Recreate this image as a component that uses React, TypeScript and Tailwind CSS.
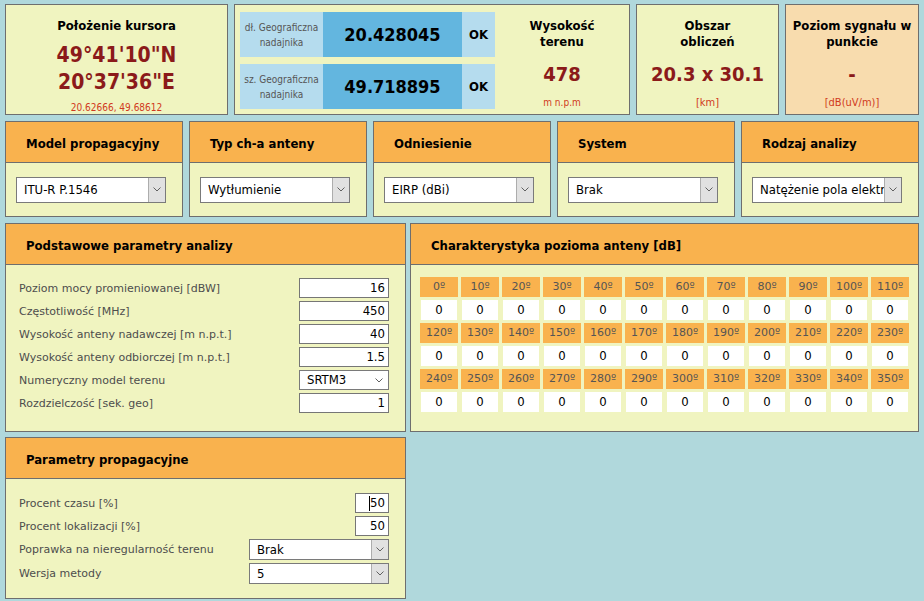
import React from 'react';

const Chevron = () => (
  <svg width="8" height="5" viewBox="0 0 8 5" fill="none">
    <path d="M0.5 0.5L4 4L7.5 0.5" stroke="#606060" strokeWidth="1" />
  </svg>
);

function FakeSelect({ value, w, h, plain = false }: { value: string; w: string; h: string; plain?: boolean }) {
  return (
    <div className={`${w} ${h} flex items-stretch bg-white border border-[#7a7a7a] text-[13px] text-black font-['DejaVu_Sans_Condensed','DejaVu_Sans',sans-serif]`}>
      <div className="flex-1 flex items-center pl-[7px] overflow-hidden whitespace-nowrap">{value}</div>
      {plain ? (
        <div className="w-[18px] flex items-center justify-center">
          <Chevron />
        </div>
      ) : (
        <div className="w-[17px] flex items-center justify-center bg-[#e1e1e1] border-l border-[#adadad]">
          <Chevron />
        </div>
      )}
    </div>
  );
}

function PanelHeader({ title }: { title: string }) {
  return (
    <div className="h-[41px] pt-[3px] bg-[#f9b24e] border-b border-[#6e6e6e] flex items-center pl-[20px] font-bold text-[13px] text-black shrink-0 font-['DejaVu_Sans_Condensed','DejaVu_Sans',sans-serif]">
      {title}
    </div>
  );
}

function NumInput({ value, w, caret = false }: { value: string; w: string; caret?: boolean }) {
  return (
    <div className={`${w} h-[20px] bg-white border border-[#767676] flex items-center justify-end pr-[3px] text-[13px] text-black font-['DejaVu_Sans_Condensed','DejaVu_Sans',sans-serif]`}>
      {caret && <span className="inline-block w-px h-[15px] bg-black" />}
      {value}
    </div>
  );
}

const basicParams: { label: string; value: string; select?: boolean }[] = [
  { label: 'Poziom mocy promieniowanej [dBW]', value: '16' },
  { label: 'Częstotliwość [MHz]', value: '450' },
  { label: 'Wysokość anteny nadawczej [m n.p.t.]', value: '40' },
  { label: 'Wysokość anteny odbiorczej [m n.p.t.]', value: '1.5' },
  { label: 'Numeryczny model terenu', value: 'SRTM3', select: true },
  { label: 'Rozdzielczość [sek. geo]', value: '1' },
];

const dropdowns = [
  { title: 'Model propagacyjny', value: 'ITU-R P.1546' },
  { title: 'Typ ch-a anteny', value: 'Wytłumienie' },
  { title: 'Odniesienie', value: 'EIRP (dBi)' },
  { title: 'System', value: 'Brak' },
  { title: 'Rodzaj analizy', value: 'Natężenie pola elektr' },
];

const angleRows = [0, 1, 2].map((r) => Array.from({ length: 12 }, (_, i) => (r * 12 + i) * 10));

export default function App() {
  return (
    <div className="w-[924px] h-[601px] bg-[#b0d8dc] font-['DejaVu_Sans',sans-serif] px-[5px] pt-[4px] flex flex-col gap-[6px] overflow-hidden">
      {/* Top info row */}
      <div className="flex gap-[6px] h-[111px] font-['DejaVu_Sans_Condensed','DejaVu_Sans',sans-serif]">
        <div className="w-[223px] bg-[#f0f4c0] border border-[#6e6e6e] flex flex-col items-center pt-[13px]">
          <div className="font-bold text-[13px] leading-[16px] text-black">Położenie kursora</div>
          <div className="mt-[8px] font-bold text-[21px] leading-[27px] text-[#8b1a1a] text-center">
            49°41'10"N
            <br />
            20°37'36"E
          </div>
          <div className="mt-[4px] text-[10px] text-[#d03a20]">20.62666, 49.68612</div>
        </div>

        <div className="w-[396px] bg-[#f0f4c0] border border-[#6e6e6e] flex pl-[5px] pt-[7px]">
          <div className="flex flex-col gap-[7px]">
            {[
              { label: 'dł. Geograficzna', value: '20.428045' },
              { label: 'sz. Geograficzna', value: '49.718895' },
            ].map((r) => (
              <div key={r.value} className="flex h-[45px]">
                <div className="w-[83px] bg-[#b5dcee] flex flex-col items-center justify-center text-[10px] leading-[15px] text-[#555] whitespace-nowrap">
                  <span>{r.label}</span>
                  <span>nadajnika</span>
                </div>
                <div className="w-[139px] bg-[#63b6df] flex items-center justify-center font-bold text-[18px] text-black">
                  {r.value}
                </div>
                <div className="w-[33px] bg-[#b5dcee] flex items-center justify-center font-bold text-[13px] text-black">
                  OK
                </div>
              </div>
            ))}
          </div>
          <div className="flex-1 flex flex-col items-center pt-[6px]">
            <div className="font-bold text-[13px] leading-[16px] text-center text-black">
              Wysokość
              <br />
              terenu
            </div>
            <div className="mt-[11px] font-bold text-[20px] leading-[27px] text-[#8b1a1a]">478</div>
            <div className="mt-[7px] text-[10px] text-[#d03a20]">m n.p.m</div>
          </div>
        </div>

        <div className="w-[143px] bg-[#f0f4c0] border border-[#6e6e6e] flex flex-col items-center pt-[13px]">
          <div className="font-bold text-[13px] leading-[16px] text-center text-black">
            Obszar
            <br />
            obliczeń
          </div>
          <div className="mt-[11px] font-bold text-[20px] leading-[27px] text-[#8b1a1a]">20.3 x 30.1</div>
          <div className="mt-[7px] text-[11px] text-[#d03a20]">[km]</div>
        </div>

        <div className="flex-1 bg-[#f8dcae] border border-[#6e6e6e] flex flex-col items-center pt-[13px]">
          <div className="font-bold text-[13px] leading-[16px] text-center text-black">
            Poziom sygnału w
            <br />
            punkcie
          </div>
          <div className="mt-[11px] font-bold text-[20px] leading-[27px] text-[#8b1a1a]">-</div>
          <div className="mt-[7px] text-[11px] text-[#d03a20]">[dB(uV/m)]</div>
        </div>
      </div>

      {/* Dropdown row */}
      <div className="flex gap-[6px] h-[96px]">
        {dropdowns.map((d) => (
          <div key={d.title} className="flex-1 bg-[#f0f4c0] border border-[#6e6e6e] flex flex-col">
            <PanelHeader title={d.title} />
            <div className="flex-1 flex items-center pl-[10px]">
              <FakeSelect value={d.value} w="w-[150px]" h="h-[26px]" />
            </div>
          </div>
        ))}
      </div>

      {/* Lower area */}
      <div className="flex gap-[4px]">
        <div className="w-[401px] flex flex-col gap-[5px]">
          <div className="h-[209px] bg-[#f0f4c0] border border-[#6e6e6e] flex flex-col">
            <PanelHeader title="Podstawowe parametry analizy" />
            <div className="flex flex-col gap-[3px] pt-[13px] pl-[13px] pr-[16px]">
              {basicParams.map((p) => (
                <div key={p.label} className="flex items-center justify-between h-[20px]">
                  <span className="pt-[2px] text-[11px] text-[#4d4d4d]">{p.label}</span>
                  {p.select ? (
                    <FakeSelect value={p.value} w="w-[90px]" h="h-[20px]" plain />
                  ) : (
                    <NumInput value={p.value} w="w-[90px]" />
                  )}
                </div>
              ))}
            </div>
          </div>

          <div className="h-[162px] bg-[#f0f4c0] border border-[#6e6e6e] flex flex-col">
            <PanelHeader title="Parametry propagacyjne" />
            <div className="flex flex-col gap-[3px] pt-[14px] pl-[13px] pr-[16px]">
              <div className="flex items-center justify-between h-[20px]">
                <span className="pt-[2px] text-[11px] text-[#4d4d4d]">Procent czasu [%]</span>
                <NumInput value="50" w="w-[34px]" caret />
              </div>
              <div className="flex items-center justify-between h-[20px]">
                <span className="pt-[2px] text-[11px] text-[#4d4d4d]">Procent lokalizacji [%]</span>
                <NumInput value="50" w="w-[34px]" />
              </div>
              <div className="flex items-center justify-between h-[21px]">
                <span className="pt-[2px] text-[11px] text-[#4d4d4d]">Poprawka na nieregularność terenu</span>
                <FakeSelect value="Brak" w="w-[140px]" h="h-[21px]" />
              </div>
              <div className="flex items-center justify-between h-[21px]">
                <span className="pt-[2px] text-[11px] text-[#4d4d4d]">Wersja metody</span>
                <FakeSelect value="5" w="w-[140px]" h="h-[21px]" />
              </div>
            </div>
          </div>
        </div>

        <div className="w-[509px] h-[209px] bg-[#f0f4c0] border border-[#6e6e6e] flex flex-col">
          <PanelHeader title="Charakterystyka pozioma anteny [dB]" />
          <div className="flex flex-col gap-[3px] pt-[12px] pl-[9px]">
            {angleRows.map((row, ri) => (
              <React.Fragment key={ri}>
                <div className="flex gap-[3px]">
                  {row.map((a) => (
                    <div key={a} className="w-[38px] h-[20px] bg-[#f9b24e] flex items-center justify-center text-[11px] text-[#555]">
                      {a}º
                    </div>
                  ))}
                </div>
                <div className="flex gap-[3px]">
                  {row.map((a) => (
                    <div key={a} className="w-[38px] h-[20px] px-[1px]">
                      <div className="w-full h-full bg-white flex items-center justify-center text-[13px] text-black font-['DejaVu_Sans_Condensed','DejaVu_Sans',sans-serif]">
                        0
                      </div>
                    </div>
                  ))}
                </div>
              </React.Fragment>
            ))}
          </div>
        </div>
      </div>
    </div>
  );
}
